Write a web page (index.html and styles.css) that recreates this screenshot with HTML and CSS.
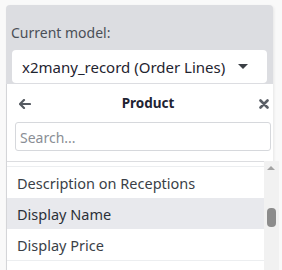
FILE: index.html
```html
<!DOCTYPE html>
<html>
<head>
<meta charset="utf-8">
<link rel="stylesheet" href="styles.css">
</head>
<body>
<div class="panel">
  <div class="label">Current model:</div>
  <div class="select">
    <span class="select-text">x2many_record (Order Lines)</span>
    <span class="caret"></span>
  </div>
  <div class="popover">
    <div class="pop-head">
      <svg class="back" width="12" height="10" viewBox="0 0 12 10"><path d="M5 1 L1 5 L5 9 M1 5 H11" fill="none" stroke="#555a61" stroke-width="2.2" stroke-linecap="round" stroke-linejoin="round"/></svg>
      <span class="title">Product</span>
      <svg class="close" width="10" height="10" viewBox="0 0 10 10"><path d="M1.5 1.5 L8.5 8.5 M8.5 1.5 L1.5 8.5" fill="none" stroke="#5a5f66" stroke-width="2.6" stroke-linecap="round"/></svg>
    </div>
    <div class="search-wrap">
      <div class="search">Search...</div>
    </div>
    <div class="list-area">
      <div class="items">
        <div class="item">Description on Receptions</div>
        <div class="item active">Display Name</div>
        <div class="item">Display Price</div>
      </div>
      <div class="scrollbar">
        <span class="arrow-up"></span>
        <span class="thumb"></span>
      </div>
    </div>
  </div>
</div>
</body>
</html>
```
FILE: styles.css
```css
html, body {
  margin: 0;
  padding: 0;
  background: #f9f9f9;
  font-family: "Noto Sans", "Open Sans", sans-serif;
  overflow: hidden;
}
body {
  width: 282px;
  height: 270px;
}
.panel {
  position: relative;
  margin: 5px 0 0 6px;
  width: 267px;
  height: 265px;
  background: #dcdde1;
  border-radius: 4px 4px 0 0;
  box-shadow: 1px 1px 3px rgba(0,0,0,0.08);
}
.label {
  padding: 20px 0 0 5px;
  height: 25px;
  font-size: 14px;
  line-height: 16px;
  color: #4a4f57;
}
.select {
  margin: 0 6px;
  height: 33px;
  background: #fff;
  border-radius: 4px;
  display: flex;
  align-items: center;
  padding: 0 0 0 10px;
  box-sizing: border-box;
}
.select-text {
  font-size: 15px;
  color: #1f2430;
  flex: 1;
  padding-top: 1px;
}
.caret {
  width: 0;
  height: 0;
  border-left: 5px solid transparent;
  border-right: 5px solid transparent;
  border-top: 5px solid #3b3f45;
  margin-right: 19px;
}
.popover {
  position: absolute;
  left: 0;
  top: 79px;
  width: 266px;
  height: 186px;
  background: #fff;
  border-left: 1px solid #d4d5d8;
}
.pop-head {
  height: 38px;
  display: flex;
  align-items: center;
  justify-content: space-between;
  padding: 0 4px 0 12px;
}
.back { margin-top: 2px; }
.close { margin-top: 2px; }
.title {
  font-weight: bold;
  font-size: 13.5px;
  color: #1f2433;
  margin-left: 6px;
}
.search-wrap {
  padding: 0 2px 0 8px;
}
.search {
  height: 29px;
  border: 1px solid #d6d8dc;
  border-radius: 3px;
  box-sizing: border-box;
  font-size: 14px;
  color: #8a8e95;
  padding: 5px 0 0 4px;
}
.list-area {
  margin-top: 10px;
  border-top: 1px solid #dcdde0;
  display: flex;
  padding-top: 4px;
  width: 272px;
}
.items {
  flex: 0 0 257px;
  border-top: 1px solid #eceef0;
}
.item {
  height: 31px;
  display: flex;
  align-items: center;
  padding-left: 10px;
  font-size: 14.5px;
  color: #3a3f47;
}
.item:last-child {
  border-bottom: 1px solid #eceef0;
}
.item.active {
  background: #e8e9ed;
  color: #2b3038;
}
.scrollbar {
  flex: 0 0 15px;
  height: 120px;
  margin-top: -5px;
  background: #f1f1f1;
  position: relative;
}
.arrow-up {
  position: absolute;
  left: 3px;
  top: 5px;
  width: 0;
  height: 0;
  border-left: 4px solid transparent;
  border-right: 4px solid transparent;
  border-bottom: 4px solid #a3a3a3;
}
.thumb {
  position: absolute;
  left: 3px;
  top: 47px;
  width: 9px;
  height: 19px;
  border-radius: 4px;
  background: #8c8c8c;
}
```
